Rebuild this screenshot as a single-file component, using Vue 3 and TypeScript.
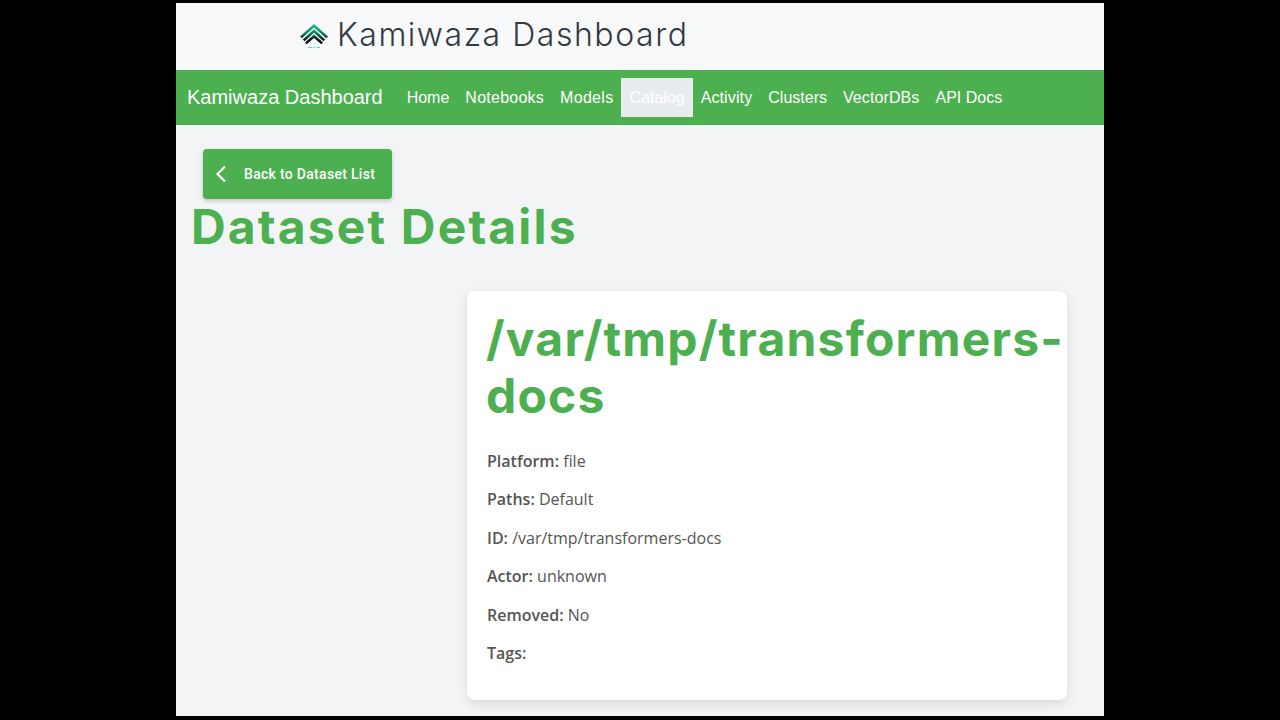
<script setup lang="ts">
const links: string[] = ['Home', 'Notebooks', 'Models', 'Catalog', 'Activity', 'Clusters', 'VectorDBs', 'API Docs']
const details: { label: string; value: string }[] = [
  { label: 'Platform:', value: 'file' },
  { label: 'Paths:', value: 'Default' },
  { label: 'ID:', value: '/var/tmp/transformers-docs' },
  { label: 'Actor:', value: 'unknown' },
  { label: 'Removed:', value: 'No' },
  { label: 'Tags:', value: '' },
]
</script>

<template>
  <div class="frame">
    <header class="top">
      <svg class="logo" viewBox="0 0 28 24" width="28" height="24" aria-hidden="true">
        <defs>
          <linearGradient id="g" gradientUnits="userSpaceOnUse" x1="0" y1="0" x2="0" y2="19">
            <stop offset="0" stop-color="#1fc592" />
            <stop offset="0.45" stop-color="#0c8a66" />
            <stop offset="0.8" stop-color="#07221b" />
            <stop offset="1" stop-color="#050b09" />
          </linearGradient>
        </defs>
        <path d="M14 0 L28 12.5 L26.2 14.3 L14 3.4 L1.8 14.3 L0 12.5 Z" fill="url(#g)" />
        <path d="M14 5.2 L25.2 15.4 L23.4 17.2 L14 8.8 L4.6 17.2 L2.8 15.4 Z" fill="url(#g)" />
        <path d="M14 10.4 L23 18.6 L21.2 20.2 L14 14 L6.8 20.2 L5 18.6 Z" fill="url(#g)" />
        <path d="M8 23.4 H12 M13.5 23.4 H15 M16.5 23.4 H20" stroke="#3fd0a6" stroke-width="0.9" />
      </svg>
      <span class="top-title">Kamiwaza Dashboard</span>
    </header>
    <nav class="nav">
      <span class="brand">Kamiwaza Dashboard</span>
      <ul class="links">
        <li v-for="l in links" :key="l" class="link" :class="{ active: l === 'Catalog' }">{{ l }}</li>
      </ul>
    </nav>
    <main class="content">
      <button class="back" type="button">
        <svg viewBox="0 0 12 18" width="12" height="18" aria-hidden="true">
          <path d="M10 1.5 L2.5 9 L10 16.5" fill="none" stroke="#fff" stroke-width="2.2" />
        </svg>
        <span>Back to Dataset List</span>
      </button>
      <h1 class="title">Dataset Details</h1>
      <section class="card">
        <h2 class="name">/var/tmp/transformers-docs</h2>
        <p v-for="d in details" :key="d.label" class="row"><strong>{{ d.label }}</strong> {{ d.value }}</p>
      </section>
    </main>
  </div>
</template>

<style>
html, body { background: #000; margin: 0; }
</style>

<style scoped>
.frame {
  width: 928px;
  height: 713px;
  margin: 3px auto 0;
  background: #f3f4f6;
  overflow: hidden;
}
.top {
  height: 67px;
  display: flex;
  align-items: center;
  padding: 0 0 4px 124px;
  background: #f8f9fb;
  box-sizing: border-box;
}
.logo { margin-right: 9px; margin-top: 3px; }
.top-title {
  font-family: Inter, sans-serif;
  font-size: 32px;
  font-weight: 300;
  letter-spacing: 1.55px;
  color: #343a40;
}
.nav {
  height: 55px;
  display: flex;
  align-items: center;
  background: #4caf50;
  padding-left: 11px;
}
.brand {
  font-family: "Liberation Sans", sans-serif;
  font-size: 20px;
  color: #fff;
  margin-right: 16px;
}
.links {
  display: flex;
  list-style: none;
  margin: 0;
  padding: 0;
}
.link {
  font-family: "Liberation Sans", sans-serif;
  font-size: 16px;
  line-height: 23px;
  color: #fff;
  padding: 8px;
}
.link:nth-child(2) { letter-spacing: 0.25px; }
.link:nth-child(3) { letter-spacing: 0.3px; }
.link:nth-child(5) { letter-spacing: 0.12px; }
.link:nth-child(7) { letter-spacing: 0.1px; }
.active { background: #e9ecef; }
.content { padding: 24px 15px 0; }
.back {
  display: flex;
  align-items: center;
  width: 189px;
  height: 50px;
  margin-left: 12px;
  padding: 0 0 0 12px;
  border: 0;
  border-radius: 4px;
  background: #4caf50;
  color: #fff;
  font-family: Roboto, sans-serif;
  font-size: 14px;
  font-weight: 500;
  letter-spacing: 0.3px;
  box-shadow: 0 2px 4px rgba(0, 0, 0, 0.2);
}
.back span { margin-left: 17px; }
.title {
  margin: 2px 0 0;
  font-family: Inter, sans-serif;
  font-size: 48px;
  line-height: 52px;
  font-weight: 700;
  letter-spacing: 2.15px;
  color: #4caf50;
}
.card {
  width: 600px;
  height: 409px;
  box-sizing: border-box;
  margin: 38px 0 0 276px;
  padding: 19px 20px 20px;
  background: #fff;
  border-radius: 8px;
  box-shadow: 0 4px 12px rgba(0, 0, 0, 0.1);
}
.name {
  margin: 0 0 25.5px -1px;
  font-family: Inter, sans-serif;
  font-size: 48px;
  line-height: 57px;
  font-weight: 700;
  letter-spacing: 1.2px;
  color: #4caf50;
}
.row {
  margin: 0 0 16px;
  font-family: "Open Sans", sans-serif;
  font-size: 16px;
  line-height: 22.5px;
  color: #555;
}
.row strong { font-weight: 600; }
</style>
